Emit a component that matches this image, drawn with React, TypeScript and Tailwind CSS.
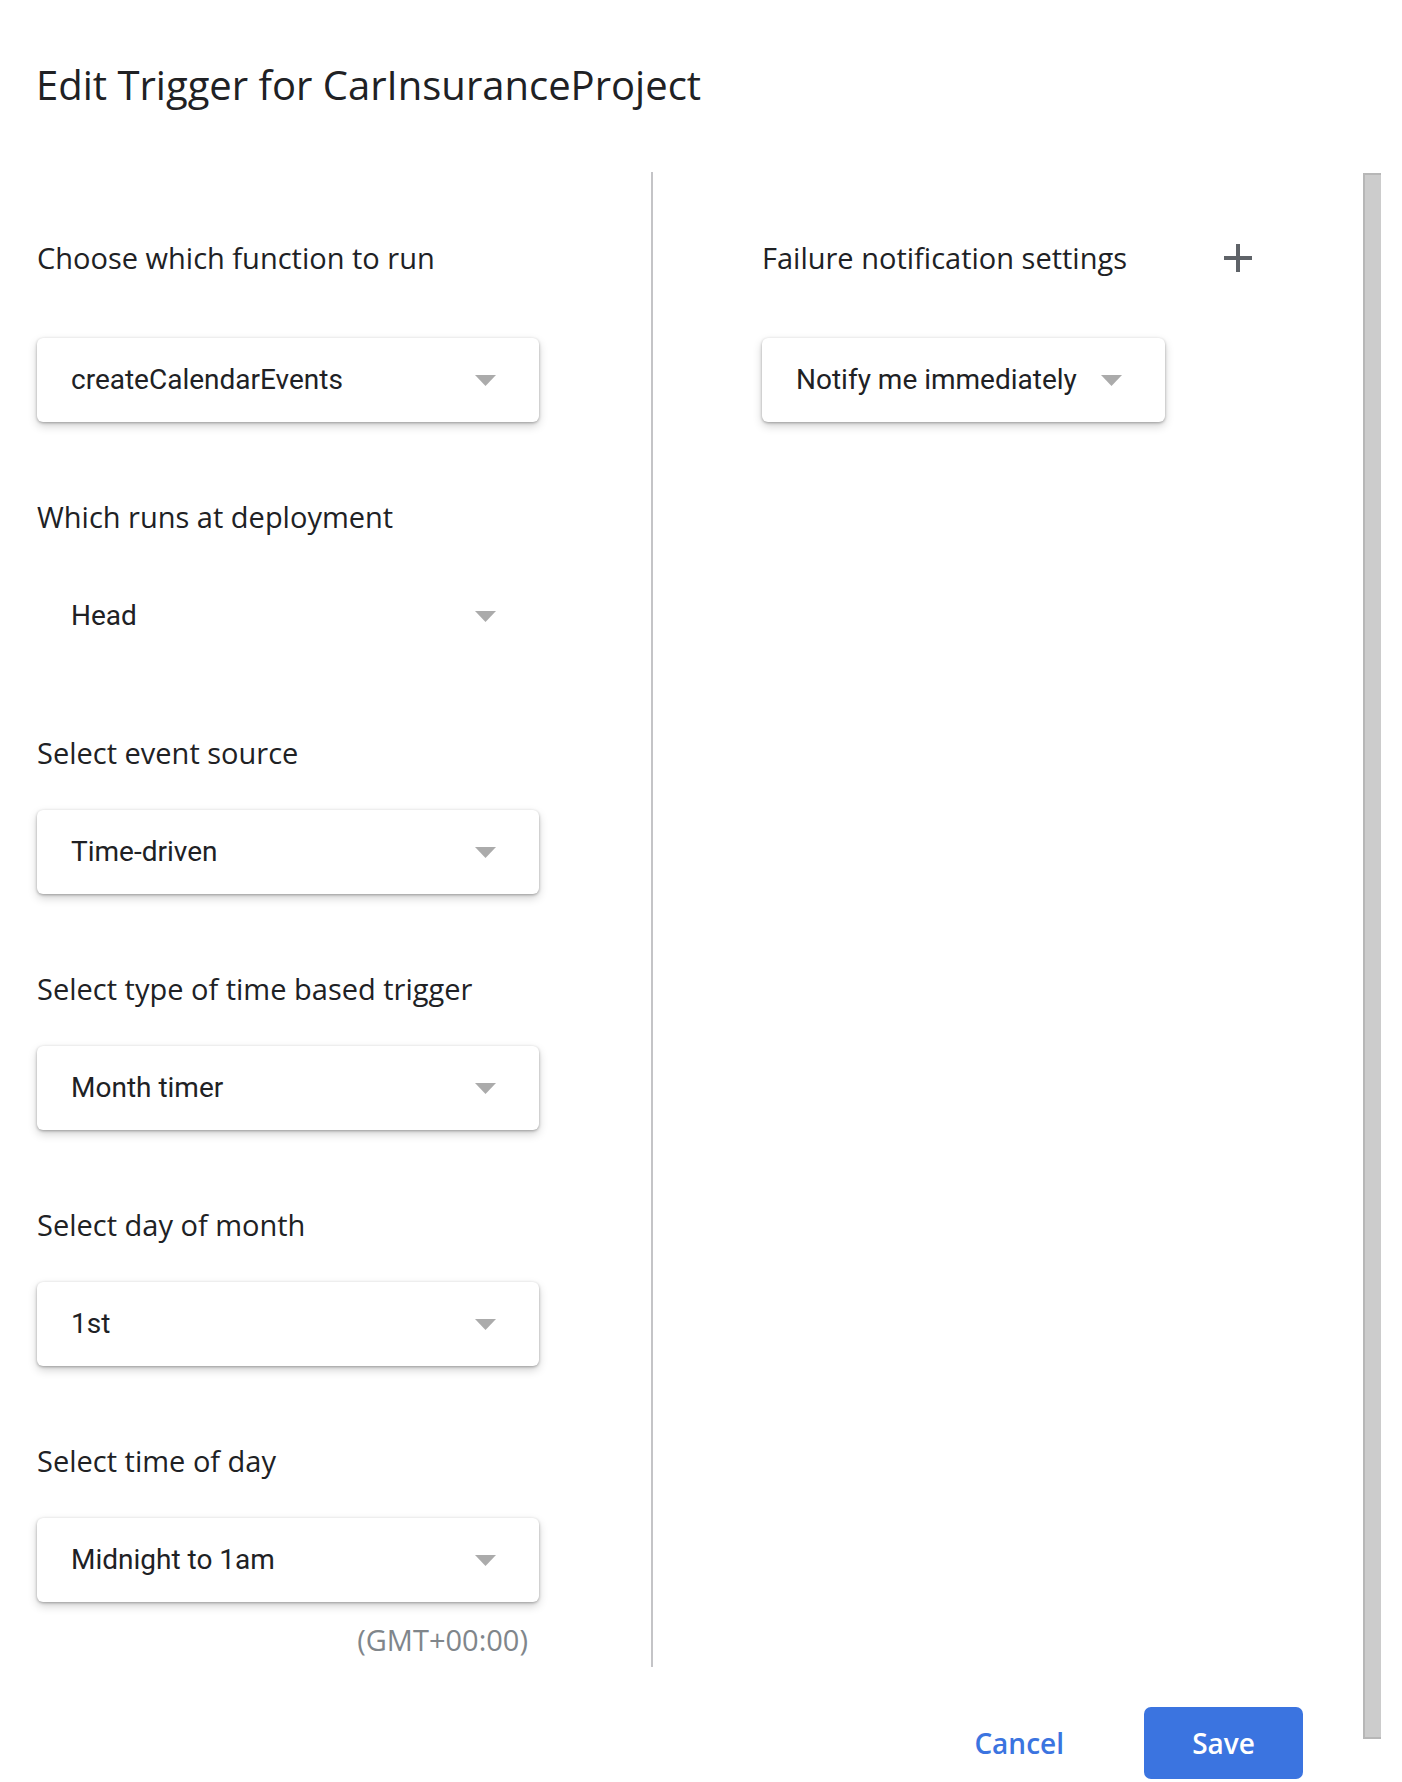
import React from 'react';

const labelFont = { fontFamily: '"Open Sans", "Liberation Sans", sans-serif' };

function Arrow() {
  return (
    <svg width="21" height="11" viewBox="0 0 21 11" className="shrink-0">
      <polygon points="0,0 21,0 10.5,11" fill="#ababab" />
    </svg>
  );
}

interface SelectBoxProps {
  value: string;
  flat?: boolean;
  fit?: boolean;
}

function SelectBox({ value, flat, fit }: SelectBoxProps) {
  const shell = flat
    ? 'bg-white'
    : 'bg-white rounded-[6px] shadow-[0_1px_3px_rgba(0,0,0,0.3),0_4px_10px_rgba(0,0,0,0.18)]';
  return (
    <div
      className={`${shell} h-[84px] flex items-center pl-[34px] pr-[43px] ${
        fit ? 'w-fit gap-[24px]' : 'w-[502px] justify-between'
      }`}
    >
      <span
        className="text-[28px] text-[#202124] leading-none"
        style={{ fontFamily: 'Roboto, "Liberation Sans", sans-serif' }}
      >
        {value}
      </span>
      <Arrow />
    </div>
  );
}

function Label({ children }: { children: React.ReactNode }) {
  return (
    <div className="h-[40px] leading-[40px] text-[29px] text-[#202124]" style={labelFont}>
      {children}
    </div>
  );
}

export default function App() {
  const fields = [
    { label: 'Which runs at deployment', value: 'Head', flat: true },
    { label: 'Select event source', value: 'Time-driven' },
    { label: 'Select type of time based trigger', value: 'Month timer' },
    { label: 'Select day of month', value: '1st' },
    { label: 'Select time of day', value: 'Midnight to 1am' },
  ];

  return (
    <div className="w-[1402px] h-[1782px] bg-white flex overflow-hidden">
      <div className="w-[1363px] flex flex-col">
        <h1
          className="pt-[58px] pl-[36px] h-[111px] leading-[54px] text-[40px] font-medium text-[#202124]"
          style={labelFont}
        >
          Edit Trigger for CarInsuranceProject
        </h1>

        <div className="mt-[61px] h-[1495px] flex">
          <div className="w-[651px] pl-[37px] pt-[66px] flex flex-col">
            <Label>Choose which function to run</Label>
            <div className="mt-[60px]">
              <SelectBox value="createCalendarEvents" />
            </div>
            {fields.map((f) => (
              <div key={f.label} className="mt-[75px]">
                <Label>{f.label}</Label>
                <div className="mt-[37px]">
                  <SelectBox value={f.value} flat={f.flat} />
                </div>
              </div>
            ))}
            <div
              className="mt-[18px] w-[502px] pr-[11px] text-right h-[40px] leading-[40px] text-[29px] text-[#80868b]"
              style={labelFont}
            >
              (GMT+00:00)
            </div>
          </div>

          <div className="w-[2px] h-full bg-[#c4c4c7]" />

          <div className="pl-[109px] pt-[66px] flex flex-col">
            <div className="w-[490px] flex items-center justify-between">
              <Label>Failure notification settings</Label>
              <svg width="28" height="28" viewBox="0 0 28 28">
                <rect x="12" y="0" width="4" height="28" fill="#5f6368" />
                <rect x="0" y="12" width="28" height="4" fill="#5f6368" />
              </svg>
            </div>
            <div className="mt-[60px]">
              <SelectBox value="Notify me immediately" fit />
            </div>
          </div>
        </div>

        <div className="mt-[40px] h-[72px] flex items-center justify-end gap-[80px] pr-[60px]">
          <button
            className="text-[28px] font-semibold text-[#3b74e0] leading-none"
            style={labelFont}
          >
            Cancel
          </button>
          <button
            className="w-[159px] h-[72px] rounded-[7px] bg-[#3b74e0] text-white text-[28px] font-semibold"
            style={labelFont}
          >
            Save
          </button>
        </div>
      </div>

      <div className="mt-[173px] h-[1566px] w-[18px] bg-[#cccccc] border-l-2 border-t-2 border-b-2 border-[#b7b7b7]" />
    </div>
  );
}
